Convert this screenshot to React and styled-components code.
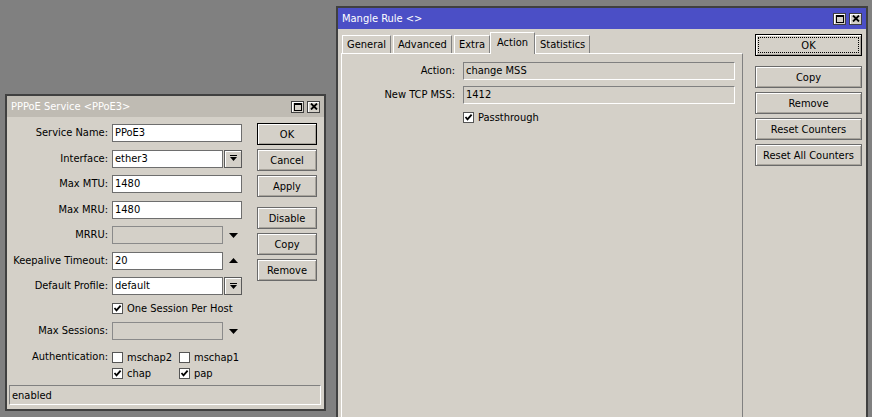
import React from "react";
import styled, { createGlobalStyle } from "styled-components";

const GlobalStyle = createGlobalStyle`
  html, body { margin: 0; padding: 0; }
  body {
    background: #808080;
    font-family: "DejaVu Sans Condensed", "Liberation Sans", Arial, sans-serif;
    font-size: 11px;
    color: #000;
  }
  * { box-sizing: border-box; }
`;

const Desktop = styled.div`
  position: relative;
  width: 872px;
  height: 417px;
  overflow: hidden;
  background: #808080;
`;

const Window = styled.div`
  position: absolute;
  left: ${(p) => p.$x}px;
  top: ${(p) => p.$y}px;
  width: ${(p) => p.$w}px;
  height: ${(p) => p.$h}px;
  display: flex;
  flex-direction: column;
  background: #d4d0c8;
  border: 2px solid #404040;
`;

const TitleBar = styled.div`
  height: 21px;
  flex-shrink: 0;
  display: flex;
  align-items: center;
  justify-content: space-between;
  padding: 0 4px;
  background: ${(p) => (p.$active ? "#4b4fc6" : "#bfbbb3")};
  color: #fff;
  line-height: 13px;
  white-space: nowrap;
`;

const TitleButtons = styled.div`
  display: flex;
  gap: 3px;
`;

const TitleButton = styled.div`
  width: 13px;
  height: 12px;
  display: flex;
  align-items: center;
  justify-content: center;
  background: #d4d0c8;
  border: 1px solid #404040;
  box-shadow: inset 1px 1px 0 #fff;
`;

const Body = styled.div`
  flex: 1;
  min-height: 0;
  display: flex;
  flex-direction: ${(p) => (p.$column ? "column" : "row")};
  padding: ${(p) => p.$pad};
`;

const Main = styled.div`
  flex: 1;
  display: flex;
  align-items: flex-start;
`;

const Form = styled.div`
  display: flex;
  flex-direction: column;
  gap: ${(p) => p.$gap}px;
  padding-top: ${(p) => p.$top || 0}px;
`;

const Row = styled.div`
  display: grid;
  grid-template-columns: ${(p) => p.$label}px ${(p) => p.$field}px;
  column-gap: ${(p) => p.$gap}px;
  align-items: ${(p) => (p.$top ? "start" : "center")};
  min-height: ${(p) => p.$h || 18}px;
  margin-top: ${(p) => p.$mt || 0}px;
`;

const Label = styled.div`
  text-align: right;
  white-space: nowrap;
  line-height: 12px;
`;

const FieldGroup = styled.div`
  display: flex;
  align-items: center;
  gap: 1px;
`;

const Field = styled.div`
  flex: 1;
  height: 18px;
  padding: 0 2px;
  line-height: 16px;
  white-space: nowrap;
  overflow: hidden;
  background: ${(p) => (p.$disabled ? "#d4d0c8" : "#fff")};
  border: 1px solid;
  border-color: ${(p) =>
    p.$sunken ? "#808080 #fff #fff #808080" : p.$disabled ? "#8a8a8a" : "#6e6e6e"};
`;

const DropButton = styled.div`
  width: 18px;
  height: 18px;
  display: flex;
  align-items: center;
  justify-content: center;
  background: #d4d0c8;
  border: 1px solid #5a5a5a;
  box-shadow: inset 1px 1px 0 #fff;
`;

const ArrowSlot = styled.div`
  width: 18px;
  height: 18px;
  display: flex;
  align-items: center;
  justify-content: center;
`;

const CheckLine = styled.div`
  display: flex;
  align-items: center;
  gap: 4px;
  height: 12px;
  white-space: nowrap;
`;

const Box = styled.span`
  width: 11px;
  height: 11px;
  display: inline-flex;
  align-items: center;
  justify-content: center;
  background: #fff;
  border: 1px solid #555;
`;

const CheckGrid = styled.div`
  display: grid;
  grid-template-columns: 67px auto;
  row-gap: 4px;
`;

const ButtonCol = styled.div`
  width: ${(p) => p.$w}px;
  margin-left: ${(p) => p.$ml}px;
  padding-top: ${(p) => p.$top || 0}px;
  display: flex;
  flex-direction: column;
  gap: 4px;
  flex-shrink: 0;
`;

const Button = styled.div`
  position: relative;
  height: 22px;
  margin-top: ${(p) => p.$mt || 0}px;
  display: flex;
  align-items: center;
  justify-content: center;
  white-space: nowrap;
  background: #d4d0c8;
  border: 1px solid ${(p) => (p.$default ? "#000" : "#6a6a6a")};
  box-shadow: inset 1px 1px 0 #fff, inset -1px -1px 0 #a8a49c;

  &::after {
    content: "";
    display: ${(p) => (p.$focus ? "block" : "none")};
    position: absolute;
    inset: 2px;
    border: 1px dotted #000;
  }
`;

const StatusBar = styled.div`
  height: 20px;
  margin: 0 3px 0 1px;
  padding: 0 2px;
  display: flex;
  align-items: center;
  border: 1px solid;
  border-color: #808080 #fff #fff #808080;
`;

const TabArea = styled.div`
  width: 402px;
  display: flex;
  flex-direction: column;
`;

const TabStrip = styled.div`
  height: 21px;
  display: flex;
  align-items: flex-end;
  gap: 2px;
  padding-left: 1px;
`;

const Tab = styled.div`
  position: relative;
  height: ${(p) => (p.$active ? 22 : 18)}px;
  margin: ${(p) => (p.$active ? "0 -2px -1px" : "0")};
  padding: ${(p) => (p.$active ? "0 6px 2px" : "0 4px")};
  z-index: ${(p) => (p.$active ? 1 : 0)};
  display: flex;
  align-items: center;
  white-space: nowrap;
  background: #d4d0c8;
  border: 1px solid;
  border-bottom: none;
  border-color: #fff #808080 transparent #fff;
`;

const TabPanel = styled.div`
  flex: 1;
  padding: 8px 7px 0 0;
  border-top: 1px solid #fff;
  border-left: 1px solid #fff;
  border-right: 1px solid #808080;
`;

const MaxIcon = () => (
  <svg width="8" height="8" viewBox="0 0 8 8">
    <rect x="0.5" y="0.5" width="7" height="7" fill="none" stroke="#000" />
    <line x1="0" y1="1.5" x2="8" y2="1.5" stroke="#000" />
  </svg>
);

const CloseIcon = () => (
  <svg width="8" height="7" viewBox="0 0 8 7">
    <path d="M1 0.5 L7 6.5 M7 0.5 L1 6.5" stroke="#000" strokeWidth="1.8" />
  </svg>
);

const DropIcon = () => (
  <svg width="7" height="7" viewBox="0 0 7 7">
    <rect x="0" y="0" width="7" height="1" fill="#000" />
    <path d="M0 2 H7 L3.5 6 Z" fill="#000" />
  </svg>
);

const Triangle = ({ up }) => (
  <svg width="9" height="5" viewBox="0 0 9 5">
    <path d={up ? "M0 5 H9 L4.5 0 Z" : "M0 0 H9 L4.5 5 Z"} fill="#000" />
  </svg>
);

const CheckMark = () => (
  <svg width="9" height="9" viewBox="0 0 9 9">
    <path d="M1.5 4 L3.5 6.3 L7.6 1.6" fill="none" stroke="#000" strokeWidth="1.8" />
  </svg>
);

const Check = ({ checked, children }) => (
  <CheckLine>
    <Box>{checked && <CheckMark />}</Box>
    <span>{children}</span>
  </CheckLine>
);

const WindowTitle = ({ title, active }) => (
  <TitleBar $active={active}>
    <span>{title}</span>
    <TitleButtons>
      <TitleButton>
        <MaxIcon />
      </TitleButton>
      <TitleButton>
        <CloseIcon />
      </TitleButton>
    </TitleButtons>
  </TitleBar>
);

const P = { $label: 100, $field: 130, $gap: 4 };
const M = { $label: 113, $field: 272, $gap: 8 };

const PppoeWindow = () => (
  <Window $x={5} $y={94} $w={321} $h={317}>
    <WindowTitle title="PPPoE Service <PPoE3>" />
    <Body $column $pad="6px 0 4px 1px">
      <Main>
        <Form $gap={7.5} $top={1}>
          <Row {...P}>
            <Label>Service Name:</Label>
            <Field>PPoE3</Field>
          </Row>
          <Row {...P}>
            <Label>Interface:</Label>
            <FieldGroup>
              <Field>ether3</Field>
              <DropButton>
                <DropIcon />
              </DropButton>
            </FieldGroup>
          </Row>
          <Row {...P}>
            <Label>Max MTU:</Label>
            <Field>1480</Field>
          </Row>
          <Row {...P}>
            <Label>Max MRU:</Label>
            <Field>1480</Field>
          </Row>
          <Row {...P}>
            <Label>MRRU:</Label>
            <FieldGroup>
              <Field $disabled />
              <ArrowSlot>
                <Triangle />
              </ArrowSlot>
            </FieldGroup>
          </Row>
          <Row {...P}>
            <Label>Keepalive Timeout:</Label>
            <FieldGroup>
              <Field>20</Field>
              <ArrowSlot>
                <Triangle up />
              </ArrowSlot>
            </FieldGroup>
          </Row>
          <Row {...P}>
            <Label>Default Profile:</Label>
            <FieldGroup>
              <Field>default</Field>
              <DropButton>
                <DropIcon />
              </DropButton>
            </FieldGroup>
          </Row>
          <Row {...P} $h={12}>
            <span />
            <Check checked>One Session Per Host</Check>
          </Row>
          <Row {...P}>
            <Label>Max Sessions:</Label>
            <FieldGroup>
              <Field $disabled />
              <ArrowSlot>
                <Triangle />
              </ArrowSlot>
            </FieldGroup>
          </Row>
          <Row {...P} $top $h={28} $mt={3.5}>
            <Label>Authentication:</Label>
            <CheckGrid>
              <Check>mschap2</Check>
              <Check>mschap1</Check>
              <Check checked>chap</Check>
              <Check checked>pap</Check>
            </CheckGrid>
          </Row>
        </Form>
        <ButtonCol $w={60} $ml={15}>
          <Button $default>OK</Button>
          <Button>Cancel</Button>
          <Button>Apply</Button>
          <Button $mt={6}>Disable</Button>
          <Button>Copy</Button>
          <Button>Remove</Button>
        </ButtonCol>
      </Main>
      <StatusBar>enabled</StatusBar>
    </Body>
  </Window>
);

const tabs = ["General", "Advanced", "Extra", "Action", "Statistics"];

const MangleWindow = () => (
  <Window $x={336} $y={6} $w={532} $h={420}>
    <WindowTitle title="Mangle Rule <>" active />
    <Body $pad="3px 4px 0 3px">
      <TabArea>
        <TabStrip>
          {tabs.map((t) => (
            <Tab key={t} $active={t === "Action"}>
              {t}
            </Tab>
          ))}
        </TabStrip>
        <TabPanel>
          <Form $gap={6}>
            <Row {...M}>
              <Label>Action:</Label>
              <Field $disabled $sunken>change MSS</Field>
            </Row>
            <Row {...M}>
              <Label>New TCP MSS:</Label>
              <Field $disabled $sunken>1412</Field>
            </Row>
            <Row {...M} $h={14}>
              <span />
              <Check checked>Passthrough</Check>
            </Row>
          </Form>
        </TabPanel>
      </TabArea>
      <ButtonCol $w={107} $ml={12} $top={2}>
        <Button $default $focus>OK</Button>
        <Button $mt={6}>Copy</Button>
        <Button>Remove</Button>
        <Button>Reset Counters</Button>
        <Button>Reset All Counters</Button>
      </ButtonCol>
    </Body>
  </Window>
);

export default function App() {
  return (
    <>
      <GlobalStyle />
      <Desktop>
        <PppoeWindow />
        <MangleWindow />
      </Desktop>
    </>
  );
}
